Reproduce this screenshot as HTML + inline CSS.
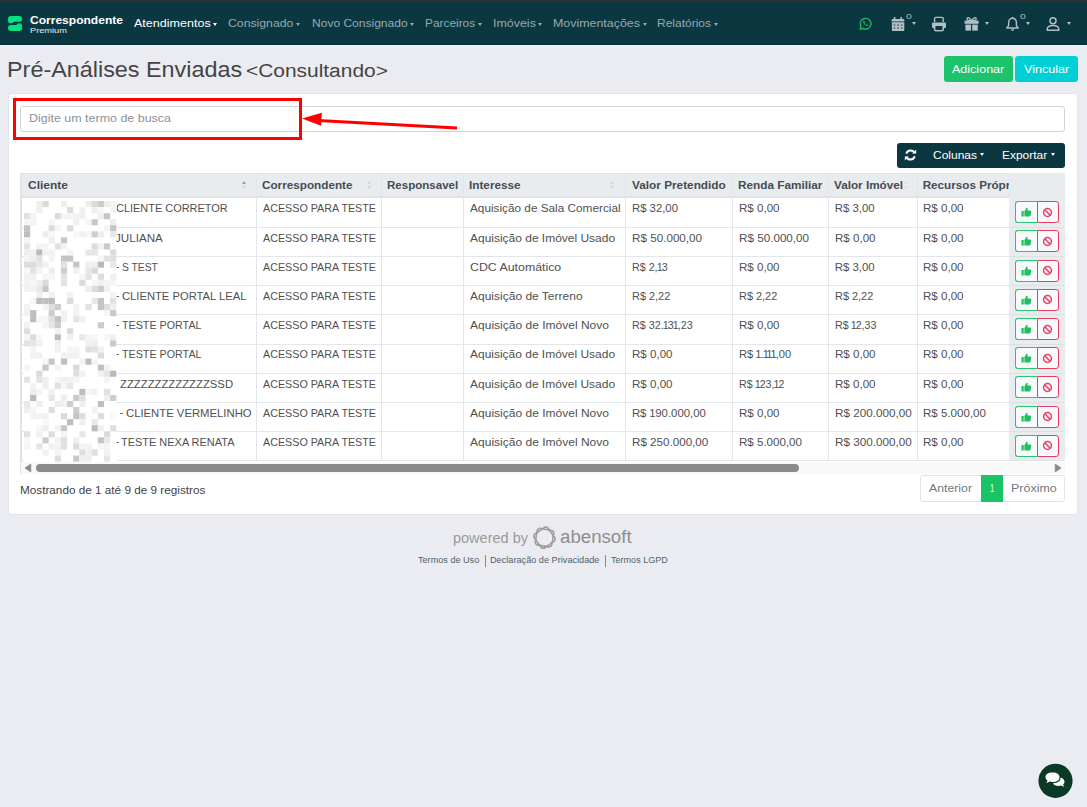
<!DOCTYPE html>
<html><head><meta charset="utf-8">
<style>
*{box-sizing:border-box;margin:0;padding:0}
html,body{width:1087px;height:807px;overflow:hidden}
body{background:#ebecf1;font-family:"Liberation Sans",sans-serif;position:relative}
.a{position:absolute;white-space:nowrap}
</style></head><body>
<div class="a" style="left:0px;top:0px;width:1087px;height:2px;background:#2f2f2f;"></div>
<div class="a" style="left:0px;top:2px;width:1087px;height:42px;background:#0b3741;"></div>
<div class="a" style="left:0px;top:44px;width:1087px;height:1px;background:#042d36;"></div>
<div class="a" style="left:0px;top:45px;width:1087px;height:1px;background:#f1f2f5;"></div>
<svg class="a" style="left:0;top:0" width="40" height="45" viewBox="0 0 40 45"><g fill="#02e082"><rect x="8" y="16" width="14.1" height="5.8" rx="2.9"/><circle cx="10.9" cy="20.4" r="2.9"/><rect x="8" y="25.1" width="14.1" height="5.8" rx="2.9"/><circle cx="19.2" cy="26.2" r="2.9"/></g></svg>
<div class="a" style="left:29.92px;top:15px;font-size:11px;line-height:11px;color:#ffffff;font-weight:bold;transform:scaleX(1.0940);transform-origin:0 0;">Correspondente</div>
<div class="a" style="left:29.66px;top:27px;font-size:8px;line-height:8px;color:#e6ecee;transform:scaleX(1.1496);transform-origin:0 0;">Premium</div>
<div class="a" style="left:133.90px;top:18px;font-size:11.5px;line-height:11.5px;color:#ffffff;transform:scaleX(1.0912);transform-origin:0 0;">Atendimentos</div>
<div class="a" style="left:213.2px;top:22.5px;width:0;height:0;border-left:2.75px solid transparent;border-right:2.75px solid transparent;border-top:3px solid #ffffff"></div>
<div class="a" style="left:228.39px;top:18px;font-size:11.5px;line-height:11.5px;color:#95aab0;transform:scaleX(1.0644);transform-origin:0 0;">Consignado</div>
<div class="a" style="left:296.2px;top:22.5px;width:0;height:0;border-left:2.75px solid transparent;border-right:2.75px solid transparent;border-top:3px solid #95aab0"></div>
<div class="a" style="left:311.54px;top:18px;font-size:11.5px;line-height:11.5px;color:#95aab0;transform:scaleX(1.0461);transform-origin:0 0;">Novo Consignado</div>
<div class="a" style="left:409.7px;top:22.5px;width:0;height:0;border-left:2.75px solid transparent;border-right:2.75px solid transparent;border-top:3px solid #95aab0"></div>
<div class="a" style="left:425.05px;top:18px;font-size:11.5px;line-height:11.5px;color:#95aab0;transform:scaleX(1.0325);transform-origin:0 0;">Parceiros</div>
<div class="a" style="left:477.8px;top:22.5px;width:0;height:0;border-left:2.75px solid transparent;border-right:2.75px solid transparent;border-top:3px solid #95aab0"></div>
<div class="a" style="left:492.88px;top:18px;font-size:11.5px;line-height:11.5px;color:#95aab0;transform:scaleX(1.0817);transform-origin:0 0;">Imóveis</div>
<div class="a" style="left:538.3px;top:22.5px;width:0;height:0;border-left:2.75px solid transparent;border-right:2.75px solid transparent;border-top:3px solid #95aab0"></div>
<div class="a" style="left:553.01px;top:18px;font-size:11.5px;line-height:11.5px;color:#95aab0;transform:scaleX(1.0791);transform-origin:0 0;">Movimentações</div>
<div class="a" style="left:642.5px;top:22.5px;width:0;height:0;border-left:2.75px solid transparent;border-right:2.75px solid transparent;border-top:3px solid #95aab0"></div>
<div class="a" style="left:657.24px;top:18px;font-size:11.5px;line-height:11.5px;color:#95aab0;transform:scaleX(1.0431);transform-origin:0 0;">Relatórios</div>
<div class="a" style="left:713.8px;top:22.5px;width:0;height:0;border-left:2.75px solid transparent;border-right:2.75px solid transparent;border-top:3px solid #95aab0"></div>
<svg class="a" style="left:858.6px;top:17.3px" width="13.4" height="13.4" viewBox="0 0 15 15"><path d="M1.3 13.8 L2.2 10.6 A6 6 0 1 1 4.4 12.8 Z" fill="none" stroke="#1cbd58" stroke-width="1.5" stroke-linejoin="round"/><path d="M5 4.6 Q4.4 5.2 4.8 6.4 Q5.8 8.8 8.3 9.9 Q9.4 10.3 10 9.6 L10.1 8.9 L8.9 8.3 L8.3 8.8 Q6.8 8.1 6.1 6.6 L6.6 6 L6 4.6 Z" fill="#1cbd58"/></svg>
<svg class="a" style="left:891px;top:16px" width="16" height="16" viewBox="0 0 16 16" fill="#b3c0c5"><rect x="2.8" y="1" width="1.6" height="2.6" rx=".4"/><rect x="9.4" y="1" width="1.6" height="2.6" rx=".4"/><path d="M1.6 3 h10.7 a1 1 0 0 1 1 1 v1.6 h-12.7 v-1.6 a1 1 0 0 1 1 -1z"/><path d="M.9 6.2 h12.4 v7.8 a.9 .9 0 0 1 -.9 .9 h-10.6 a.9 .9 0 0 1 -.9 -.9z"/><g fill="#5c6f76"><rect x="2.6" y="8.2" width="1.7" height="1.7"/><rect x="6.2" y="8.2" width="1.7" height="1.7"/><rect x="9.8" y="8.2" width="1.7" height="1.7"/><rect x="2.6" y="11.3" width="1.7" height="1.7"/><rect x="6.2" y="11.3" width="1.7" height="1.7"/><rect x="9.8" y="11.3" width="1.7" height="1.7"/></g></svg>
<div class="a" style="left:905.88px;top:13px;font-size:8px;line-height:8px;color:#b3c0c5;transform:scaleX(1.3021);transform-origin:0 0;">0</div>
<div class="a" style="left:912px;top:21.8px;width:0;height:0;border-left:2.75px solid transparent;border-right:2.75px solid transparent;border-top:3px solid #b3c0c5"></div>
<svg class="a" style="left:931px;top:16px" width="16" height="16" viewBox="0 0 16 16"><path d="M3.6 6 V2.6 a1.2 1.2 0 0 1 1.2 -1.2 h6.2 a1.2 1.2 0 0 1 1.2 1.2 V6" fill="none" stroke="#b3c0c5" stroke-width="1.4"/><path d="M2.2 6.4 h11.6 a1.2 1.2 0 0 1 1.2 1.2 v3.2 a1.2 1.2 0 0 1 -1.2 1.2 h-11.6 a1.2 1.2 0 0 1 -1.2 -1.2 v-3.2 a1.2 1.2 0 0 1 1.2 -1.2z" fill="#b3c0c5"/><path d="M3.6 10.6 V13.6 a1 1 0 0 0 1 1 h6.6 a1 1 0 0 0 1 -1 V10.6" fill="none" stroke="#b3c0c5" stroke-width="1.4"/><rect x="4.3" y="10" width="7.4" height="4" fill="#0b3741"/><path d="M3.6 10.2 V13.6 a1 1 0 0 0 1 1 h6.6 a1 1 0 0 0 1 -1 V10.2" fill="none" stroke="#b3c0c5" stroke-width="1.4"/></svg>
<svg class="a" style="left:964px;top:16px" width="16" height="16" viewBox="0 0 16 16" fill="#b3c0c5"><path d="M7.2 4.3 C5.5 1 2.8 1 3 3.2 C3.1 4 3.8 4.3 4.5 4.3z M8 4.3 C9.7 1 12.4 1 12.2 3.2 C12.1 4 11.4 4.3 10.7 4.3z" fill="none" stroke="#b3c0c5" stroke-width="1.3"/><rect x="0.6" y="4.6" width="14" height="3.2"/><rect x="1.4" y="8.6" width="5.6" height="6"/><rect x="8.2" y="8.6" width="5.6" height="6"/></svg>
<div class="a" style="left:985.2px;top:21.8px;width:0;height:0;border-left:2.75px solid transparent;border-right:2.75px solid transparent;border-top:3px solid #b3c0c5"></div>
<svg class="a" style="left:1005px;top:16px" width="16" height="16" viewBox="0 0 16 16"><path d="M7.5 2.2 C4.7 2.2 3.6 4.5 3.6 7 v2.6 L1.8 12 h11.4 L11.4 9.6 V7 C11.4 4.5 10.3 2.2 7.5 2.2z" fill="none" stroke="#b3c0c5" stroke-width="1.4" stroke-linejoin="round"/><rect x="6.8" y="0.9" width="1.4" height="1.6" fill="#b3c0c5"/><path d="M5.9 13.2 h3.2 a1.6 1.6 0 0 1 -3.2 0z" fill="#b3c0c5"/></svg>
<div class="a" style="left:1019.78px;top:13px;font-size:8px;line-height:8px;color:#b3c0c5;transform:scaleX(1.3021);transform-origin:0 0;">0</div>
<div class="a" style="left:1025.8px;top:21.8px;width:0;height:0;border-left:2.75px solid transparent;border-right:2.75px solid transparent;border-top:3px solid #b3c0c5"></div>
<svg class="a" style="left:1045px;top:16px" width="16" height="16" viewBox="0 0 16 16" fill="none" stroke="#b3c0c5" stroke-width="1.5"><circle cx="8" cy="4.8" r="3"/><path d="M2.2 14.2 v-0.8 C2.2 10.4 5 9.4 8 9.4 C11 9.4 13.8 10.4 13.8 13.4 v0.8z" stroke-linejoin="round"/></svg>
<div class="a" style="left:1066.6px;top:21.8px;width:0;height:0;border-left:2.75px solid transparent;border-right:2.75px solid transparent;border-top:3px solid #b3c0c5"></div>
<div class="a" style="left:6.63px;top:59px;font-size:22.5px;line-height:22.5px;color:#444444;transform:scaleX(1.0390);transform-origin:0 0;">Pré-Análises Enviadas</div>
<div class="a" style="left:246.25px;top:62px;font-size:18px;line-height:18px;color:#444444;transform:scaleX(1.1618);transform-origin:0 0;">&lt;Consultando&gt;</div>
<div class="a" style="left:944px;top:56px;width:69px;height:26px;background:#1cc36b;border-radius:3px;"></div>
<div class="a" style="left:952.00px;top:64px;font-size:11px;line-height:11px;color:#ffffff;transform:scaleX(1.1391);transform-origin:0 0;">Adicionar</div>
<div class="a" style="left:1015px;top:56px;width:63px;height:26px;background:#00cfd6;border-radius:3px;"></div>
<div class="a" style="left:1023.94px;top:64px;font-size:11px;line-height:11px;color:#ffffff;transform:scaleX(1.1459);transform-origin:0 0;">Vincular</div>
<div class="a" style="left:8px;top:93px;width:1070px;height:422px;background:#ffffff;border:1px solid #e2e4e9;border-radius:3px;"></div>
<div class="a" style="left:20px;top:106px;width:1045px;height:26px;background:#ffffff;border:1px solid #cfd4da;border-radius:3px;"></div>
<div class="a" style="left:29.00px;top:113px;font-size:11px;line-height:11px;color:#8c9196;transform:scaleX(1.1328);transform-origin:0 0;">Digite um termo de busca</div>
<div class="a" style="left:897px;top:143px;width:168px;height:25px;background:#0b3741;border-radius:3px;"></div>
<svg class="a" style="left:904px;top:149px" width="13" height="12" viewBox="0 0 13 12"><path d="M10.6 4.2 A4.4 4.4 0 0 0 2.3 4.6" fill="none" stroke="#fff" stroke-width="2"/><path d="M8.2 4.6 h4 v-4z" fill="#fff"/><path d="M2.4 7.8 A4.4 4.4 0 0 0 10.7 7.4" fill="none" stroke="#fff" stroke-width="2"/><path d="M4.8 7.4 h-4 v4z" fill="#fff"/></svg>
<div class="a" style="left:933.30px;top:150px;font-size:11px;line-height:11px;color:#ffffff;transform:scaleX(1.0904);transform-origin:0 0;">Colunas</div>
<div class="a" style="left:979.5px;top:153px;width:0;height:0;border-left:2.75px solid transparent;border-right:2.75px solid transparent;border-top:3px solid #ffffff"></div>
<div class="a" style="left:1001.64px;top:150px;font-size:11px;line-height:11px;color:#ffffff;transform:scaleX(1.0870);transform-origin:0 0;">Exportar</div>
<div class="a" style="left:1050.5px;top:153px;width:0;height:0;border-left:2.75px solid transparent;border-right:2.75px solid transparent;border-top:3px solid #ffffff"></div>
<div class="a" style="left:21px;top:173px;width:1044px;height:24px;background:#e9ecef;"></div>
<div class="a" style="left:21px;top:197px;width:1044px;height:264px;background:#ffffff;"></div>
<div class="a" style="left:27.52px;top:179px;font-size:11.7px;line-height:11.7px;color:#444c55;font-weight:bold;transform:scaleX(1.0225);transform-origin:0 0;">Cliente</div>
<div class="a" style="left:262.23px;top:179px;font-size:11.7px;line-height:11.7px;color:#444c55;font-weight:bold;transform:scaleX(1.0028);transform-origin:0 0;">Correspondente</div>
<div class="a" style="left:386.75px;top:179px;font-size:11.7px;line-height:11.7px;color:#444c55;font-weight:bold;transform:scaleX(0.9871);transform-origin:0 0;">Responsavel</div>
<div class="a" style="left:469.43px;top:179px;font-size:11.7px;line-height:11.7px;color:#444c55;font-weight:bold;transform:scaleX(1.0061);transform-origin:0 0;">Interesse</div>
<div class="a" style="left:632.44px;top:179px;font-size:11.7px;line-height:11.7px;color:#444c55;font-weight:bold;transform:scaleX(1.0094);transform-origin:0 0;">Valor Pretendido</div>
<div class="a" style="left:738.03px;top:179px;font-size:11.7px;line-height:11.7px;color:#444c55;font-weight:bold;transform:scaleX(1.0066);transform-origin:0 0;">Renda Familiar</div>
<div class="a" style="left:834.44px;top:179px;font-size:11.7px;line-height:11.7px;color:#444c55;font-weight:bold;transform:scaleX(1.0030);transform-origin:0 0;">Valor Imóvel</div>
<div class="a" style="left:922.64px;top:179px;font-size:11.7px;line-height:11.7px;color:#444c55;font-weight:bold;">Recursos Própr</div>
<div class="a" style="left:241.5px;top:181px;width:0;height:0;border-left:2.5px solid transparent;border-right:2.5px solid transparent;border-bottom:3px solid #9aa0a6"></div>
<div class="a" style="left:241.5px;top:186px;width:0;height:0;border-left:2.5px solid transparent;border-right:2.5px solid transparent;border-top:3px solid #d0d4d8"></div>
<div class="a" style="left:367px;top:181px;width:0;height:0;border-left:2.5px solid transparent;border-right:2.5px solid transparent;border-bottom:3px solid #d0d4d8"></div>
<div class="a" style="left:367px;top:186px;width:0;height:0;border-left:2.5px solid transparent;border-right:2.5px solid transparent;border-top:3px solid #d0d4d8"></div>
<div class="a" style="left:610px;top:181px;width:0;height:0;border-left:2.5px solid transparent;border-right:2.5px solid transparent;border-bottom:3px solid #d0d4d8"></div>
<div class="a" style="left:610px;top:186px;width:0;height:0;border-left:2.5px solid transparent;border-right:2.5px solid transparent;border-top:3px solid #d0d4d8"></div>
<div class="a" style="left:904px;top:181px;width:0;height:0;border-left:2.5px solid transparent;border-right:2.5px solid transparent;border-bottom:3px solid #dde0e4"></div>
<div class="a" style="left:904px;top:186px;width:0;height:0;border-left:2.5px solid transparent;border-right:2.5px solid transparent;border-top:3px solid #dde0e4"></div>
<div class="a" style="left:116.05px;top:203px;font-size:10.8px;line-height:10.8px;color:#505050;transform:scaleX(1.0138);transform-origin:0 0;">CLIENTE CORRETOR</div>
<div class="a" style="left:262.70px;top:203px;font-size:10.7px;line-height:10.7px;color:#505050;transform:scaleX(1.0050);transform-origin:0 0;">ACESSO PARA TESTE</div>
<div class="a" style="left:470.20px;top:202px;font-size:11.7px;line-height:11.7px;color:#505050;transform:scaleX(1.0076);transform-origin:0 0;">Aquisição de Sala Comercial</div>
<div class="a" style="left:631.89px;top:203px;font-size:11.4px;line-height:11.4px;color:#505050;transform:scaleX(0.9939);transform-origin:0 0;">R$ 32,00</div>
<div class="a" style="left:738.57px;top:203px;font-size:11.4px;line-height:11.4px;color:#505050;transform:scaleX(1.0158);transform-origin:0 0;">R$ 0,00</div>
<div class="a" style="left:834.69px;top:203px;font-size:11.4px;line-height:11.4px;color:#505050;">R$ 3,00</div>
<div class="a" style="left:922.87px;top:203px;font-size:11.4px;line-height:11.4px;color:#505050;transform:scaleX(1.0158);transform-origin:0 0;">R$ 0,00</div>
<div class="a" style="left:21px;top:227px;width:1044px;height:1px;background:#e3e6ea;"></div>
<div class="a" style="left:115.33px;top:233px;font-size:10.8px;line-height:10.8px;color:#505050;transform:scaleX(1.0763);transform-origin:0 0;">JULIANA</div>
<div class="a" style="left:262.70px;top:233px;font-size:10.7px;line-height:10.7px;color:#505050;transform:scaleX(1.0050);transform-origin:0 0;">ACESSO PARA TESTE</div>
<div class="a" style="left:470.20px;top:232px;font-size:11.7px;line-height:11.7px;color:#505050;transform:scaleX(1.0242);transform-origin:0 0;">Aquisição de Imóvel Usado</div>
<div class="a" style="left:631.87px;top:233px;font-size:11.4px;line-height:11.4px;color:#505050;transform:scaleX(1.0246);transform-origin:0 0;">R$ 50.000,00</div>
<div class="a" style="left:738.57px;top:233px;font-size:11.4px;line-height:11.4px;color:#505050;transform:scaleX(1.0246);transform-origin:0 0;">R$ 50.000,00</div>
<div class="a" style="left:834.67px;top:233px;font-size:11.4px;line-height:11.4px;color:#505050;transform:scaleX(1.0158);transform-origin:0 0;">R$ 0,00</div>
<div class="a" style="left:922.87px;top:233px;font-size:11.4px;line-height:11.4px;color:#505050;transform:scaleX(1.0158);transform-origin:0 0;">R$ 0,00</div>
<div class="a" style="left:21px;top:256px;width:1044px;height:1px;background:#e3e6ea;"></div>
<div class="a" style="left:122.34px;top:262px;font-size:10.8px;line-height:10.8px;color:#505050;transform:scaleX(0.9544);transform-origin:0 0;">S TEST</div>
<div class="a" style="left:116.2px;top:267px;width:3px;height:1px;background:#6a6a6a;"></div>
<div class="a" style="left:262.70px;top:262px;font-size:10.7px;line-height:10.7px;color:#505050;transform:scaleX(1.0050);transform-origin:0 0;">ACESSO PARA TESTE</div>
<div class="a" style="left:469.58px;top:261px;font-size:11.7px;line-height:11.7px;color:#505050;transform:scaleX(1.0561);transform-origin:0 0;">CDC Automático</div>
<div class="a" style="left:631.94px;top:262px;font-size:11.4px;line-height:11.4px;color:#505050;transform:scaleX(0.9389);transform-origin:0 0;">R$ 2<span style="letter-spacing:-1.00px">,</span><span style="letter-spacing:-1.00px">1</span>3</div>
<div class="a" style="left:738.57px;top:262px;font-size:11.4px;line-height:11.4px;color:#505050;transform:scaleX(1.0158);transform-origin:0 0;">R$ 0,00</div>
<div class="a" style="left:834.69px;top:262px;font-size:11.4px;line-height:11.4px;color:#505050;">R$ 3,00</div>
<div class="a" style="left:922.87px;top:262px;font-size:11.4px;line-height:11.4px;color:#505050;transform:scaleX(1.0158);transform-origin:0 0;">R$ 0,00</div>
<div class="a" style="left:21px;top:285px;width:1044px;height:1px;background:#e3e6ea;"></div>
<div class="a" style="left:121.84px;top:291px;font-size:10.8px;line-height:10.8px;color:#505050;transform:scaleX(1.0381);transform-origin:0 0;">CLIENTE PORTAL LEAL</div>
<div class="a" style="left:116.2px;top:296px;width:3px;height:1px;background:#6a6a6a;"></div>
<div class="a" style="left:262.70px;top:291px;font-size:10.7px;line-height:10.7px;color:#505050;transform:scaleX(1.0050);transform-origin:0 0;">ACESSO PARA TESTE</div>
<div class="a" style="left:470.20px;top:290px;font-size:11.7px;line-height:11.7px;color:#505050;transform:scaleX(1.0273);transform-origin:0 0;">Aquisição de Terreno</div>
<div class="a" style="left:631.93px;top:291px;font-size:11.4px;line-height:11.4px;color:#505050;transform:scaleX(0.9579);transform-origin:0 0;">R$ 2,22</div>
<div class="a" style="left:738.63px;top:291px;font-size:11.4px;line-height:11.4px;color:#505050;transform:scaleX(0.9579);transform-origin:0 0;">R$ 2,22</div>
<div class="a" style="left:834.73px;top:291px;font-size:11.4px;line-height:11.4px;color:#505050;transform:scaleX(0.9579);transform-origin:0 0;">R$ 2,22</div>
<div class="a" style="left:922.87px;top:291px;font-size:11.4px;line-height:11.4px;color:#505050;transform:scaleX(1.0158);transform-origin:0 0;">R$ 0,00</div>
<div class="a" style="left:21px;top:314px;width:1044px;height:1px;background:#e3e6ea;"></div>
<div class="a" style="left:121.89px;top:320px;font-size:10.8px;line-height:10.8px;color:#505050;transform:scaleX(0.9939);transform-origin:0 0;">TESTE PORTAL</div>
<div class="a" style="left:116.2px;top:325px;width:3px;height:1px;background:#6a6a6a;"></div>
<div class="a" style="left:262.70px;top:320px;font-size:10.7px;line-height:10.7px;color:#505050;transform:scaleX(1.0050);transform-origin:0 0;">ACESSO PARA TESTE</div>
<div class="a" style="left:470.20px;top:319px;font-size:11.7px;line-height:11.7px;color:#505050;transform:scaleX(1.0283);transform-origin:0 0;">Aquisição de Imóvel Novo</div>
<div class="a" style="left:631.94px;top:320px;font-size:11.4px;line-height:11.4px;color:#505050;transform:scaleX(0.9431);transform-origin:0 0;">R$ 32<span style="letter-spacing:-1.00px">.</span><span style="letter-spacing:-1.00px">1</span><span style="letter-spacing:-1.00px">3</span><span style="letter-spacing:-1.00px">1</span>,23</div>
<div class="a" style="left:738.57px;top:320px;font-size:11.4px;line-height:11.4px;color:#505050;transform:scaleX(1.0158);transform-origin:0 0;">R$ 0,00</div>
<div class="a" style="left:834.75px;top:320px;font-size:11.4px;line-height:11.4px;color:#505050;transform:scaleX(0.9367);transform-origin:0 0;">R$<span style="letter-spacing:-1.00px"> </span><span style="letter-spacing:-1.00px">1</span>2,33</div>
<div class="a" style="left:922.87px;top:320px;font-size:11.4px;line-height:11.4px;color:#505050;transform:scaleX(1.0158);transform-origin:0 0;">R$ 0,00</div>
<div class="a" style="left:21px;top:344px;width:1044px;height:1px;background:#e3e6ea;"></div>
<div class="a" style="left:121.89px;top:349px;font-size:10.8px;line-height:10.8px;color:#505050;transform:scaleX(0.9939);transform-origin:0 0;">TESTE PORTAL</div>
<div class="a" style="left:116.2px;top:354px;width:3px;height:1px;background:#6a6a6a;"></div>
<div class="a" style="left:262.70px;top:349px;font-size:10.7px;line-height:10.7px;color:#505050;transform:scaleX(1.0050);transform-origin:0 0;">ACESSO PARA TESTE</div>
<div class="a" style="left:470.20px;top:348px;font-size:11.7px;line-height:11.7px;color:#505050;transform:scaleX(1.0242);transform-origin:0 0;">Aquisição de Imóvel Usado</div>
<div class="a" style="left:631.87px;top:349px;font-size:11.4px;line-height:11.4px;color:#505050;transform:scaleX(1.0158);transform-origin:0 0;">R$ 0,00</div>
<div class="a" style="left:738.61px;top:349px;font-size:11.4px;line-height:11.4px;color:#505050;transform:scaleX(0.9783);transform-origin:0 0;">R$<span style="letter-spacing:-1.00px"> </span><span style="letter-spacing:-1.00px">1</span><span style="letter-spacing:-1.00px">.</span><span style="letter-spacing:-2.00px">1</span><span style="letter-spacing:-2.00px">1</span><span style="letter-spacing:-1.00px">1</span>,00</div>
<div class="a" style="left:834.67px;top:349px;font-size:11.4px;line-height:11.4px;color:#505050;transform:scaleX(1.0158);transform-origin:0 0;">R$ 0,00</div>
<div class="a" style="left:922.87px;top:349px;font-size:11.4px;line-height:11.4px;color:#505050;transform:scaleX(1.0158);transform-origin:0 0;">R$ 0,00</div>
<div class="a" style="left:21px;top:373px;width:1044px;height:1px;background:#e3e6ea;"></div>
<div class="a" style="left:119.56px;top:379px;font-size:10.8px;line-height:10.8px;color:#505050;transform:scaleX(1.0473);transform-origin:0 0;">ZZZZZZZZZZZZZSSD</div>
<div class="a" style="left:262.70px;top:379px;font-size:10.7px;line-height:10.7px;color:#505050;transform:scaleX(1.0050);transform-origin:0 0;">ACESSO PARA TESTE</div>
<div class="a" style="left:470.20px;top:378px;font-size:11.7px;line-height:11.7px;color:#505050;transform:scaleX(1.0242);transform-origin:0 0;">Aquisição de Imóvel Usado</div>
<div class="a" style="left:631.87px;top:379px;font-size:11.4px;line-height:11.4px;color:#505050;transform:scaleX(1.0158);transform-origin:0 0;">R$ 0,00</div>
<div class="a" style="left:738.65px;top:379px;font-size:11.4px;line-height:11.4px;color:#505050;transform:scaleX(0.9357);transform-origin:0 0;">R$<span style="letter-spacing:-1.00px"> </span><span style="letter-spacing:-1.00px">1</span>23<span style="letter-spacing:-1.00px">,</span><span style="letter-spacing:-1.00px">1</span>2</div>
<div class="a" style="left:834.67px;top:379px;font-size:11.4px;line-height:11.4px;color:#505050;transform:scaleX(1.0158);transform-origin:0 0;">R$ 0,00</div>
<div class="a" style="left:922.87px;top:379px;font-size:11.4px;line-height:11.4px;color:#505050;transform:scaleX(1.0158);transform-origin:0 0;">R$ 0,00</div>
<div class="a" style="left:21px;top:402px;width:1044px;height:1px;background:#e3e6ea;"></div>
<div class="a" style="left:125.63px;top:408px;font-size:10.8px;line-height:10.8px;color:#505050;transform:scaleX(1.0466);transform-origin:0 0;">CLIENTE VERMELINHO</div>
<div class="a" style="left:120.3px;top:413px;width:3px;height:1px;background:#6a6a6a;"></div>
<div class="a" style="left:262.70px;top:408px;font-size:10.7px;line-height:10.7px;color:#505050;transform:scaleX(1.0050);transform-origin:0 0;">ACESSO PARA TESTE</div>
<div class="a" style="left:470.20px;top:407px;font-size:11.7px;line-height:11.7px;color:#505050;transform:scaleX(1.0283);transform-origin:0 0;">Aquisição de Imóvel Novo</div>
<div class="a" style="left:631.89px;top:408px;font-size:11.4px;line-height:11.4px;color:#505050;">R$<span style="letter-spacing:-0.34px"> </span><span style="letter-spacing:-0.34px">1</span>90.000,00</div>
<div class="a" style="left:738.57px;top:408px;font-size:11.4px;line-height:11.4px;color:#505050;transform:scaleX(1.0158);transform-origin:0 0;">R$ 0,00</div>
<div class="a" style="left:834.66px;top:408px;font-size:11.4px;line-height:11.4px;color:#505050;transform:scaleX(1.0276);transform-origin:0 0;">R$ 200.000,00</div>
<div class="a" style="left:922.87px;top:408px;font-size:11.4px;line-height:11.4px;color:#505050;transform:scaleX(1.0145);transform-origin:0 0;">R$ 5.000,00</div>
<div class="a" style="left:21px;top:431px;width:1044px;height:1px;background:#e3e6ea;"></div>
<div class="a" style="left:121.48px;top:437px;font-size:10.8px;line-height:10.8px;color:#505050;transform:scaleX(1.0147);transform-origin:0 0;">TESTE NEXA RENATA</div>
<div class="a" style="left:116.2px;top:442px;width:3px;height:1px;background:#6a6a6a;"></div>
<div class="a" style="left:262.70px;top:437px;font-size:10.7px;line-height:10.7px;color:#505050;transform:scaleX(1.0050);transform-origin:0 0;">ACESSO PARA TESTE</div>
<div class="a" style="left:470.20px;top:436px;font-size:11.7px;line-height:11.7px;color:#505050;transform:scaleX(1.0283);transform-origin:0 0;">Aquisição de Imóvel Novo</div>
<div class="a" style="left:631.87px;top:437px;font-size:11.4px;line-height:11.4px;color:#505050;transform:scaleX(1.0208);transform-origin:0 0;">R$ 250.000,00</div>
<div class="a" style="left:738.57px;top:437px;font-size:11.4px;line-height:11.4px;color:#505050;transform:scaleX(1.0145);transform-origin:0 0;">R$ 5.000,00</div>
<div class="a" style="left:834.66px;top:437px;font-size:11.4px;line-height:11.4px;color:#505050;transform:scaleX(1.0276);transform-origin:0 0;">R$ 300.000,00</div>
<div class="a" style="left:922.87px;top:437px;font-size:11.4px;line-height:11.4px;color:#505050;transform:scaleX(1.0158);transform-origin:0 0;">R$ 0,00</div>
<div class="a" style="left:21px;top:460px;width:1044px;height:1px;background:#e3e6ea;"></div>
<div class="a" style="left:256.0px;top:173px;width:1px;height:288px;background:#e3e6ea;"></div>
<div class="a" style="left:380.5px;top:173px;width:1px;height:288px;background:#e3e6ea;"></div>
<div class="a" style="left:463.0px;top:173px;width:1px;height:288px;background:#e3e6ea;"></div>
<div class="a" style="left:625.1px;top:173px;width:1px;height:288px;background:#e3e6ea;"></div>
<div class="a" style="left:731.5px;top:173px;width:1px;height:288px;background:#e3e6ea;"></div>
<div class="a" style="left:828.0px;top:173px;width:1px;height:288px;background:#e3e6ea;"></div>
<div class="a" style="left:916.5px;top:173px;width:1px;height:288px;background:#e3e6ea;"></div>
<div class="a" style="left:1008.5px;top:173px;width:1px;height:288px;background:#e3e6ea;"></div>
<div class="a" style="left:20px;top:173px;width:2px;height:301px;background:#dfe2e6;"></div>
<div class="a" style="left:21px;top:173px;width:1044px;height:1px;background:#dfe2e6;"></div>
<div class="a" style="left:21px;top:196px;width:1044px;height:2px;background:#dfe2e6;"></div>
<div class="a" style="left:1009px;top:173px;width:56px;height:288px;background:#e9ecef;"></div>
<div class="a" style="left:1009px;top:227px;width:56px;height:1px;background:#dde1e5;"></div>
<div class="a" style="left:1015.4px;top:201.20px;width:22px;height:22px;background:#f8f9fa;border:1px solid #28c76f;border-right:none;border-radius:3px 0 0 3px"></div>
<div class="a" style="left:1037.2px;top:201.20px;width:21.5px;height:22px;background:#f8f9fa;border:1px solid #ee3b63;border-radius:0 3px 3px 0"></div>
<svg class="a" style="left:1021px;top:207.20px" width="11" height="10" viewBox="0 0 11 10" fill="#1dbf5e"><rect x="0.5" y="4" width="2.2" height="5.5"/><path d="M3.4 4.2 L5.6 0.8 Q6.7 0.6 6.8 1.8 L6.3 3.6 H9.3 Q10.4 3.8 10.2 5 L9.5 8.6 Q9.2 9.5 8.4 9.5 H3.4z"/></svg>
<svg class="a" style="left:1042px;top:206.70px" width="11" height="11" viewBox="0 0 11 11" fill="none" stroke="#ee3b63" stroke-width="1.5"><circle cx="5.5" cy="5.5" r="3.9"/><path d="M2.8 2.8 L8.2 8.2"/></svg>
<div class="a" style="left:1009px;top:256px;width:56px;height:1px;background:#dde1e5;"></div>
<div class="a" style="left:1015.4px;top:230.40px;width:22px;height:22px;background:#f8f9fa;border:1px solid #28c76f;border-right:none;border-radius:3px 0 0 3px"></div>
<div class="a" style="left:1037.2px;top:230.40px;width:21.5px;height:22px;background:#f8f9fa;border:1px solid #ee3b63;border-radius:0 3px 3px 0"></div>
<svg class="a" style="left:1021px;top:236.40px" width="11" height="10" viewBox="0 0 11 10" fill="#1dbf5e"><rect x="0.5" y="4" width="2.2" height="5.5"/><path d="M3.4 4.2 L5.6 0.8 Q6.7 0.6 6.8 1.8 L6.3 3.6 H9.3 Q10.4 3.8 10.2 5 L9.5 8.6 Q9.2 9.5 8.4 9.5 H3.4z"/></svg>
<svg class="a" style="left:1042px;top:235.90px" width="11" height="11" viewBox="0 0 11 11" fill="none" stroke="#ee3b63" stroke-width="1.5"><circle cx="5.5" cy="5.5" r="3.9"/><path d="M2.8 2.8 L8.2 8.2"/></svg>
<div class="a" style="left:1009px;top:285px;width:56px;height:1px;background:#dde1e5;"></div>
<div class="a" style="left:1015.4px;top:259.60px;width:22px;height:22px;background:#f8f9fa;border:1px solid #28c76f;border-right:none;border-radius:3px 0 0 3px"></div>
<div class="a" style="left:1037.2px;top:259.60px;width:21.5px;height:22px;background:#f8f9fa;border:1px solid #ee3b63;border-radius:0 3px 3px 0"></div>
<svg class="a" style="left:1021px;top:265.60px" width="11" height="10" viewBox="0 0 11 10" fill="#1dbf5e"><rect x="0.5" y="4" width="2.2" height="5.5"/><path d="M3.4 4.2 L5.6 0.8 Q6.7 0.6 6.8 1.8 L6.3 3.6 H9.3 Q10.4 3.8 10.2 5 L9.5 8.6 Q9.2 9.5 8.4 9.5 H3.4z"/></svg>
<svg class="a" style="left:1042px;top:265.10px" width="11" height="11" viewBox="0 0 11 11" fill="none" stroke="#ee3b63" stroke-width="1.5"><circle cx="5.5" cy="5.5" r="3.9"/><path d="M2.8 2.8 L8.2 8.2"/></svg>
<div class="a" style="left:1009px;top:314px;width:56px;height:1px;background:#dde1e5;"></div>
<div class="a" style="left:1015.4px;top:288.80px;width:22px;height:22px;background:#f8f9fa;border:1px solid #28c76f;border-right:none;border-radius:3px 0 0 3px"></div>
<div class="a" style="left:1037.2px;top:288.80px;width:21.5px;height:22px;background:#f8f9fa;border:1px solid #ee3b63;border-radius:0 3px 3px 0"></div>
<svg class="a" style="left:1021px;top:294.80px" width="11" height="10" viewBox="0 0 11 10" fill="#1dbf5e"><rect x="0.5" y="4" width="2.2" height="5.5"/><path d="M3.4 4.2 L5.6 0.8 Q6.7 0.6 6.8 1.8 L6.3 3.6 H9.3 Q10.4 3.8 10.2 5 L9.5 8.6 Q9.2 9.5 8.4 9.5 H3.4z"/></svg>
<svg class="a" style="left:1042px;top:294.30px" width="11" height="11" viewBox="0 0 11 11" fill="none" stroke="#ee3b63" stroke-width="1.5"><circle cx="5.5" cy="5.5" r="3.9"/><path d="M2.8 2.8 L8.2 8.2"/></svg>
<div class="a" style="left:1009px;top:344px;width:56px;height:1px;background:#dde1e5;"></div>
<div class="a" style="left:1015.4px;top:318.00px;width:22px;height:22px;background:#f8f9fa;border:1px solid #28c76f;border-right:none;border-radius:3px 0 0 3px"></div>
<div class="a" style="left:1037.2px;top:318.00px;width:21.5px;height:22px;background:#f8f9fa;border:1px solid #ee3b63;border-radius:0 3px 3px 0"></div>
<svg class="a" style="left:1021px;top:324.00px" width="11" height="10" viewBox="0 0 11 10" fill="#1dbf5e"><rect x="0.5" y="4" width="2.2" height="5.5"/><path d="M3.4 4.2 L5.6 0.8 Q6.7 0.6 6.8 1.8 L6.3 3.6 H9.3 Q10.4 3.8 10.2 5 L9.5 8.6 Q9.2 9.5 8.4 9.5 H3.4z"/></svg>
<svg class="a" style="left:1042px;top:323.50px" width="11" height="11" viewBox="0 0 11 11" fill="none" stroke="#ee3b63" stroke-width="1.5"><circle cx="5.5" cy="5.5" r="3.9"/><path d="M2.8 2.8 L8.2 8.2"/></svg>
<div class="a" style="left:1009px;top:373px;width:56px;height:1px;background:#dde1e5;"></div>
<div class="a" style="left:1015.4px;top:347.20px;width:22px;height:22px;background:#f8f9fa;border:1px solid #28c76f;border-right:none;border-radius:3px 0 0 3px"></div>
<div class="a" style="left:1037.2px;top:347.20px;width:21.5px;height:22px;background:#f8f9fa;border:1px solid #ee3b63;border-radius:0 3px 3px 0"></div>
<svg class="a" style="left:1021px;top:353.20px" width="11" height="10" viewBox="0 0 11 10" fill="#1dbf5e"><rect x="0.5" y="4" width="2.2" height="5.5"/><path d="M3.4 4.2 L5.6 0.8 Q6.7 0.6 6.8 1.8 L6.3 3.6 H9.3 Q10.4 3.8 10.2 5 L9.5 8.6 Q9.2 9.5 8.4 9.5 H3.4z"/></svg>
<svg class="a" style="left:1042px;top:352.70px" width="11" height="11" viewBox="0 0 11 11" fill="none" stroke="#ee3b63" stroke-width="1.5"><circle cx="5.5" cy="5.5" r="3.9"/><path d="M2.8 2.8 L8.2 8.2"/></svg>
<div class="a" style="left:1009px;top:402px;width:56px;height:1px;background:#dde1e5;"></div>
<div class="a" style="left:1015.4px;top:376.40px;width:22px;height:22px;background:#f8f9fa;border:1px solid #28c76f;border-right:none;border-radius:3px 0 0 3px"></div>
<div class="a" style="left:1037.2px;top:376.40px;width:21.5px;height:22px;background:#f8f9fa;border:1px solid #ee3b63;border-radius:0 3px 3px 0"></div>
<svg class="a" style="left:1021px;top:382.40px" width="11" height="10" viewBox="0 0 11 10" fill="#1dbf5e"><rect x="0.5" y="4" width="2.2" height="5.5"/><path d="M3.4 4.2 L5.6 0.8 Q6.7 0.6 6.8 1.8 L6.3 3.6 H9.3 Q10.4 3.8 10.2 5 L9.5 8.6 Q9.2 9.5 8.4 9.5 H3.4z"/></svg>
<svg class="a" style="left:1042px;top:381.90px" width="11" height="11" viewBox="0 0 11 11" fill="none" stroke="#ee3b63" stroke-width="1.5"><circle cx="5.5" cy="5.5" r="3.9"/><path d="M2.8 2.8 L8.2 8.2"/></svg>
<div class="a" style="left:1009px;top:431px;width:56px;height:1px;background:#dde1e5;"></div>
<div class="a" style="left:1015.4px;top:405.60px;width:22px;height:22px;background:#f8f9fa;border:1px solid #28c76f;border-right:none;border-radius:3px 0 0 3px"></div>
<div class="a" style="left:1037.2px;top:405.60px;width:21.5px;height:22px;background:#f8f9fa;border:1px solid #ee3b63;border-radius:0 3px 3px 0"></div>
<svg class="a" style="left:1021px;top:411.60px" width="11" height="10" viewBox="0 0 11 10" fill="#1dbf5e"><rect x="0.5" y="4" width="2.2" height="5.5"/><path d="M3.4 4.2 L5.6 0.8 Q6.7 0.6 6.8 1.8 L6.3 3.6 H9.3 Q10.4 3.8 10.2 5 L9.5 8.6 Q9.2 9.5 8.4 9.5 H3.4z"/></svg>
<svg class="a" style="left:1042px;top:411.10px" width="11" height="11" viewBox="0 0 11 11" fill="none" stroke="#ee3b63" stroke-width="1.5"><circle cx="5.5" cy="5.5" r="3.9"/><path d="M2.8 2.8 L8.2 8.2"/></svg>
<div class="a" style="left:1009px;top:460px;width:56px;height:1px;background:#dde1e5;"></div>
<div class="a" style="left:1015.4px;top:434.80px;width:22px;height:22px;background:#f8f9fa;border:1px solid #28c76f;border-right:none;border-radius:3px 0 0 3px"></div>
<div class="a" style="left:1037.2px;top:434.80px;width:21.5px;height:22px;background:#f8f9fa;border:1px solid #ee3b63;border-radius:0 3px 3px 0"></div>
<svg class="a" style="left:1021px;top:440.80px" width="11" height="10" viewBox="0 0 11 10" fill="#1dbf5e"><rect x="0.5" y="4" width="2.2" height="5.5"/><path d="M3.4 4.2 L5.6 0.8 Q6.7 0.6 6.8 1.8 L6.3 3.6 H9.3 Q10.4 3.8 10.2 5 L9.5 8.6 Q9.2 9.5 8.4 9.5 H3.4z"/></svg>
<svg class="a" style="left:1042px;top:440.30px" width="11" height="11" viewBox="0 0 11 11" fill="none" stroke="#ee3b63" stroke-width="1.5"><circle cx="5.5" cy="5.5" r="3.9"/><path d="M2.8 2.8 L8.2 8.2"/></svg>
<svg class="a" style="left:24px;top:198px" width="92.5" height="263.6" viewBox="0 0 92.5 263.6"><rect x="0" y="0" width="92.5" height="263.6" fill="#fff"/><rect x="12.30" y="3.00" width="6.2" height="6.11" fill="rgb(239,239,239)"/><rect x="18.45" y="3.00" width="6.2" height="6.11" fill="rgb(219,219,219)"/><rect x="36.90" y="3.00" width="6.2" height="6.11" fill="rgb(238,238,238)"/><rect x="61.50" y="3.00" width="6.2" height="6.11" fill="rgb(238,238,238)"/><rect x="67.65" y="3.00" width="6.2" height="6.11" fill="rgb(219,219,219)"/><rect x="73.80" y="3.00" width="6.2" height="6.11" fill="rgb(205,205,205)"/><rect x="79.95" y="3.00" width="6.2" height="6.11" fill="rgb(238,238,238)"/><rect x="86.10" y="3.00" width="6.2" height="6.11" fill="rgb(244,244,244)"/><rect x="12.30" y="9.06" width="6.2" height="6.11" fill="rgb(240,240,240)"/><rect x="43.05" y="9.06" width="6.2" height="6.11" fill="rgb(220,220,220)"/><rect x="55.35" y="9.06" width="6.2" height="6.11" fill="rgb(241,241,241)"/><rect x="67.65" y="9.06" width="6.2" height="6.11" fill="rgb(239,239,239)"/><rect x="73.80" y="9.06" width="6.2" height="6.11" fill="rgb(247,247,247)"/><rect x="86.10" y="9.06" width="6.2" height="6.11" fill="rgb(244,244,244)"/><rect x="0.00" y="15.12" width="6.2" height="6.11" fill="rgb(225,225,225)"/><rect x="6.15" y="15.12" width="6.2" height="6.11" fill="rgb(245,245,245)"/><rect x="30.75" y="15.12" width="6.2" height="6.11" fill="rgb(219,219,219)"/><rect x="36.90" y="15.12" width="6.2" height="6.11" fill="rgb(246,246,246)"/><rect x="43.05" y="15.12" width="6.2" height="6.11" fill="rgb(243,243,243)"/><rect x="49.20" y="15.12" width="6.2" height="6.11" fill="rgb(242,242,242)"/><rect x="55.35" y="15.12" width="6.2" height="6.11" fill="rgb(239,239,239)"/><rect x="73.80" y="15.12" width="6.2" height="6.11" fill="rgb(240,240,240)"/><rect x="79.95" y="15.12" width="6.2" height="6.11" fill="rgb(198,198,198)"/><rect x="0.00" y="21.18" width="6.2" height="6.11" fill="rgb(246,246,246)"/><rect x="6.15" y="21.18" width="6.2" height="6.11" fill="rgb(243,243,243)"/><rect x="24.60" y="21.18" width="6.2" height="6.11" fill="rgb(245,245,245)"/><rect x="49.20" y="21.18" width="6.2" height="6.11" fill="rgb(239,239,239)"/><rect x="61.50" y="21.18" width="6.2" height="6.11" fill="rgb(247,247,247)"/><rect x="67.65" y="21.18" width="6.2" height="6.11" fill="rgb(199,199,199)"/><rect x="86.10" y="21.18" width="6.2" height="6.11" fill="rgb(238,238,238)"/><rect x="0.00" y="27.24" width="6.2" height="6.11" fill="rgb(196,196,196)"/><rect x="24.60" y="27.24" width="6.2" height="6.11" fill="rgb(220,220,220)"/><rect x="30.75" y="27.24" width="6.2" height="6.11" fill="rgb(244,244,244)"/><rect x="43.05" y="27.24" width="6.2" height="6.11" fill="rgb(219,219,219)"/><rect x="79.95" y="27.24" width="6.2" height="6.11" fill="rgb(244,244,244)"/><rect x="86.10" y="27.24" width="6.2" height="6.11" fill="rgb(197,197,197)"/><rect x="0.00" y="33.30" width="6.2" height="6.11" fill="rgb(189,189,189)"/><rect x="18.45" y="33.30" width="6.2" height="6.11" fill="rgb(238,238,238)"/><rect x="24.60" y="33.30" width="6.2" height="6.11" fill="rgb(247,247,247)"/><rect x="49.20" y="33.30" width="6.2" height="6.11" fill="rgb(247,247,247)"/><rect x="55.35" y="33.30" width="6.2" height="6.11" fill="rgb(240,240,240)"/><rect x="61.50" y="33.30" width="6.2" height="6.11" fill="rgb(246,246,246)"/><rect x="67.65" y="33.30" width="6.2" height="6.11" fill="rgb(205,205,205)"/><rect x="73.80" y="33.30" width="6.2" height="6.11" fill="rgb(238,238,238)"/><rect x="86.10" y="33.30" width="6.2" height="6.11" fill="rgb(231,231,231)"/><rect x="0.00" y="39.36" width="6.2" height="6.11" fill="rgb(246,246,246)"/><rect x="24.60" y="39.36" width="6.2" height="6.11" fill="rgb(238,238,238)"/><rect x="36.90" y="39.36" width="6.2" height="6.11" fill="rgb(199,199,199)"/><rect x="0.00" y="45.42" width="6.2" height="6.11" fill="rgb(227,227,227)"/><rect x="12.30" y="45.42" width="6.2" height="6.11" fill="rgb(243,243,243)"/><rect x="18.45" y="45.42" width="6.2" height="6.11" fill="rgb(245,245,245)"/><rect x="30.75" y="45.42" width="6.2" height="6.11" fill="rgb(225,225,225)"/><rect x="36.90" y="45.42" width="6.2" height="6.11" fill="rgb(242,242,242)"/><rect x="67.65" y="45.42" width="6.2" height="6.11" fill="rgb(220,220,220)"/><rect x="73.80" y="45.42" width="6.2" height="6.11" fill="rgb(241,241,241)"/><rect x="79.95" y="45.42" width="6.2" height="6.11" fill="rgb(201,201,201)"/><rect x="0.00" y="51.48" width="6.2" height="6.11" fill="rgb(238,238,238)"/><rect x="6.15" y="51.48" width="6.2" height="6.11" fill="rgb(242,242,242)"/><rect x="12.30" y="51.48" width="6.2" height="6.11" fill="rgb(187,187,187)"/><rect x="18.45" y="51.48" width="6.2" height="6.11" fill="rgb(242,242,242)"/><rect x="24.60" y="51.48" width="6.2" height="6.11" fill="rgb(240,240,240)"/><rect x="43.05" y="51.48" width="6.2" height="6.11" fill="rgb(246,246,246)"/><rect x="61.50" y="51.48" width="6.2" height="6.11" fill="rgb(230,230,230)"/><rect x="67.65" y="51.48" width="6.2" height="6.11" fill="rgb(230,230,230)"/><rect x="86.10" y="51.48" width="6.2" height="6.11" fill="rgb(221,221,221)"/><rect x="0.00" y="57.54" width="6.2" height="6.11" fill="rgb(243,243,243)"/><rect x="6.15" y="57.54" width="6.2" height="6.11" fill="rgb(238,238,238)"/><rect x="12.30" y="57.54" width="6.2" height="6.11" fill="rgb(225,225,225)"/><rect x="24.60" y="57.54" width="6.2" height="6.11" fill="rgb(243,243,243)"/><rect x="36.90" y="57.54" width="6.2" height="6.11" fill="rgb(196,196,196)"/><rect x="43.05" y="57.54" width="6.2" height="6.11" fill="rgb(196,196,196)"/><rect x="73.80" y="57.54" width="6.2" height="6.11" fill="rgb(247,247,247)"/><rect x="79.95" y="57.54" width="6.2" height="6.11" fill="rgb(225,225,225)"/><rect x="86.10" y="57.54" width="6.2" height="6.11" fill="rgb(223,223,223)"/><rect x="0.00" y="63.60" width="6.2" height="6.11" fill="rgb(219,219,219)"/><rect x="6.15" y="63.60" width="6.2" height="6.11" fill="rgb(219,219,219)"/><rect x="12.30" y="63.60" width="6.2" height="6.11" fill="rgb(230,230,230)"/><rect x="18.45" y="63.60" width="6.2" height="6.11" fill="rgb(241,241,241)"/><rect x="36.90" y="63.60" width="6.2" height="6.11" fill="rgb(223,223,223)"/><rect x="49.20" y="63.60" width="6.2" height="6.11" fill="rgb(197,197,197)"/><rect x="61.50" y="63.60" width="6.2" height="6.11" fill="rgb(239,239,239)"/><rect x="67.65" y="63.60" width="6.2" height="6.11" fill="rgb(240,240,240)"/><rect x="73.80" y="63.60" width="6.2" height="6.11" fill="rgb(185,185,185)"/><rect x="86.10" y="63.60" width="6.2" height="6.11" fill="rgb(230,230,230)"/><rect x="0.00" y="69.67" width="6.2" height="6.11" fill="rgb(247,247,247)"/><rect x="6.15" y="69.67" width="6.2" height="6.11" fill="rgb(225,225,225)"/><rect x="12.30" y="69.67" width="6.2" height="6.11" fill="rgb(243,243,243)"/><rect x="24.60" y="69.67" width="6.2" height="6.11" fill="rgb(238,238,238)"/><rect x="36.90" y="69.67" width="6.2" height="6.11" fill="rgb(205,205,205)"/><rect x="49.20" y="69.67" width="6.2" height="6.11" fill="rgb(240,240,240)"/><rect x="61.50" y="69.67" width="6.2" height="6.11" fill="rgb(231,231,231)"/><rect x="67.65" y="69.67" width="6.2" height="6.11" fill="rgb(218,218,218)"/><rect x="0.00" y="75.73" width="6.2" height="6.11" fill="rgb(242,242,242)"/><rect x="6.15" y="75.73" width="6.2" height="6.11" fill="rgb(240,240,240)"/><rect x="18.45" y="75.73" width="6.2" height="6.11" fill="rgb(245,245,245)"/><rect x="24.60" y="75.73" width="6.2" height="6.11" fill="rgb(246,246,246)"/><rect x="36.90" y="75.73" width="6.2" height="6.11" fill="rgb(226,226,226)"/><rect x="55.35" y="75.73" width="6.2" height="6.11" fill="rgb(245,245,245)"/><rect x="61.50" y="75.73" width="6.2" height="6.11" fill="rgb(227,227,227)"/><rect x="73.80" y="75.73" width="6.2" height="6.11" fill="rgb(220,220,220)"/><rect x="86.10" y="75.73" width="6.2" height="6.11" fill="rgb(239,239,239)"/><rect x="0.00" y="81.79" width="6.2" height="6.11" fill="rgb(243,243,243)"/><rect x="6.15" y="81.79" width="6.2" height="6.11" fill="rgb(246,246,246)"/><rect x="12.30" y="81.79" width="6.2" height="6.11" fill="rgb(239,239,239)"/><rect x="18.45" y="81.79" width="6.2" height="6.11" fill="rgb(218,218,218)"/><rect x="36.90" y="81.79" width="6.2" height="6.11" fill="rgb(226,226,226)"/><rect x="55.35" y="81.79" width="6.2" height="6.11" fill="rgb(219,219,219)"/><rect x="67.65" y="81.79" width="6.2" height="6.11" fill="rgb(246,246,246)"/><rect x="73.80" y="81.79" width="6.2" height="6.11" fill="rgb(241,241,241)"/><rect x="79.95" y="81.79" width="6.2" height="6.11" fill="rgb(245,245,245)"/><rect x="86.10" y="81.79" width="6.2" height="6.11" fill="rgb(245,245,245)"/><rect x="0.00" y="87.85" width="6.2" height="6.11" fill="rgb(241,241,241)"/><rect x="6.15" y="87.85" width="6.2" height="6.11" fill="rgb(242,242,242)"/><rect x="12.30" y="87.85" width="6.2" height="6.11" fill="rgb(232,232,232)"/><rect x="18.45" y="87.85" width="6.2" height="6.11" fill="rgb(199,199,199)"/><rect x="61.50" y="87.85" width="6.2" height="6.11" fill="rgb(239,239,239)"/><rect x="67.65" y="87.85" width="6.2" height="6.11" fill="rgb(220,220,220)"/><rect x="73.80" y="87.85" width="6.2" height="6.11" fill="rgb(205,205,205)"/><rect x="79.95" y="87.85" width="6.2" height="6.11" fill="rgb(240,240,240)"/><rect x="12.30" y="93.91" width="6.2" height="6.11" fill="rgb(239,239,239)"/><rect x="24.60" y="93.91" width="6.2" height="6.11" fill="rgb(241,241,241)"/><rect x="43.05" y="93.91" width="6.2" height="6.11" fill="rgb(243,243,243)"/><rect x="86.10" y="93.91" width="6.2" height="6.11" fill="rgb(244,244,244)"/><rect x="6.15" y="99.97" width="6.2" height="6.11" fill="rgb(246,246,246)"/><rect x="12.30" y="99.97" width="6.2" height="6.11" fill="rgb(188,188,188)"/><rect x="18.45" y="99.97" width="6.2" height="6.11" fill="rgb(192,192,192)"/><rect x="24.60" y="99.97" width="6.2" height="6.11" fill="rgb(188,188,188)"/><rect x="43.05" y="99.97" width="6.2" height="6.11" fill="rgb(220,220,220)"/><rect x="67.65" y="99.97" width="6.2" height="6.11" fill="rgb(231,231,231)"/><rect x="73.80" y="99.97" width="6.2" height="6.11" fill="rgb(197,197,197)"/><rect x="86.10" y="99.97" width="6.2" height="6.11" fill="rgb(227,227,227)"/><rect x="0.00" y="106.03" width="6.2" height="6.11" fill="rgb(243,243,243)"/><rect x="18.45" y="106.03" width="6.2" height="6.11" fill="rgb(244,244,244)"/><rect x="24.60" y="106.03" width="6.2" height="6.11" fill="rgb(222,222,222)"/><rect x="30.75" y="106.03" width="6.2" height="6.11" fill="rgb(205,205,205)"/><rect x="49.20" y="106.03" width="6.2" height="6.11" fill="rgb(241,241,241)"/><rect x="61.50" y="106.03" width="6.2" height="6.11" fill="rgb(225,225,225)"/><rect x="73.80" y="106.03" width="6.2" height="6.11" fill="rgb(198,198,198)"/><rect x="79.95" y="106.03" width="6.2" height="6.11" fill="rgb(222,222,222)"/><rect x="86.10" y="106.03" width="6.2" height="6.11" fill="rgb(238,238,238)"/><rect x="0.00" y="112.09" width="6.2" height="6.11" fill="rgb(241,241,241)"/><rect x="6.15" y="112.09" width="6.2" height="6.11" fill="rgb(190,190,190)"/><rect x="24.60" y="112.09" width="6.2" height="6.11" fill="rgb(205,205,205)"/><rect x="36.90" y="112.09" width="6.2" height="6.11" fill="rgb(242,242,242)"/><rect x="49.20" y="112.09" width="6.2" height="6.11" fill="rgb(242,242,242)"/><rect x="79.95" y="112.09" width="6.2" height="6.11" fill="rgb(246,246,246)"/><rect x="86.10" y="112.09" width="6.2" height="6.11" fill="rgb(201,201,201)"/><rect x="6.15" y="118.15" width="6.2" height="6.11" fill="rgb(188,188,188)"/><rect x="12.30" y="118.15" width="6.2" height="6.11" fill="rgb(244,244,244)"/><rect x="18.45" y="118.15" width="6.2" height="6.11" fill="rgb(246,246,246)"/><rect x="24.60" y="118.15" width="6.2" height="6.11" fill="rgb(224,224,224)"/><rect x="30.75" y="118.15" width="6.2" height="6.11" fill="rgb(194,194,194)"/><rect x="36.90" y="118.15" width="6.2" height="6.11" fill="rgb(241,241,241)"/><rect x="49.20" y="118.15" width="6.2" height="6.11" fill="rgb(229,229,229)"/><rect x="55.35" y="118.15" width="6.2" height="6.11" fill="rgb(240,240,240)"/><rect x="0.00" y="124.21" width="6.2" height="6.11" fill="rgb(242,242,242)"/><rect x="18.45" y="124.21" width="6.2" height="6.11" fill="rgb(244,244,244)"/><rect x="24.60" y="124.21" width="6.2" height="6.11" fill="rgb(228,228,228)"/><rect x="30.75" y="124.21" width="6.2" height="6.11" fill="rgb(204,204,204)"/><rect x="73.80" y="124.21" width="6.2" height="6.11" fill="rgb(202,202,202)"/><rect x="0.00" y="130.27" width="6.2" height="6.11" fill="rgb(221,221,221)"/><rect x="30.75" y="130.27" width="6.2" height="6.11" fill="rgb(241,241,241)"/><rect x="43.05" y="130.27" width="6.2" height="6.11" fill="rgb(219,219,219)"/><rect x="0.00" y="136.33" width="6.2" height="6.11" fill="rgb(246,246,246)"/><rect x="6.15" y="136.33" width="6.2" height="6.11" fill="rgb(220,220,220)"/><rect x="12.30" y="136.33" width="6.2" height="6.11" fill="rgb(247,247,247)"/><rect x="30.75" y="136.33" width="6.2" height="6.11" fill="rgb(189,189,189)"/><rect x="43.05" y="136.33" width="6.2" height="6.11" fill="rgb(240,240,240)"/><rect x="55.35" y="136.33" width="6.2" height="6.11" fill="rgb(232,232,232)"/><rect x="61.50" y="136.33" width="6.2" height="6.11" fill="rgb(244,244,244)"/><rect x="67.65" y="136.33" width="6.2" height="6.11" fill="rgb(246,246,246)"/><rect x="79.95" y="136.33" width="6.2" height="6.11" fill="rgb(246,246,246)"/><rect x="86.10" y="136.33" width="6.2" height="6.11" fill="rgb(238,238,238)"/><rect x="0.00" y="142.39" width="6.2" height="6.11" fill="rgb(227,227,227)"/><rect x="6.15" y="142.39" width="6.2" height="6.11" fill="rgb(229,229,229)"/><rect x="12.30" y="142.39" width="6.2" height="6.11" fill="rgb(241,241,241)"/><rect x="30.75" y="142.39" width="6.2" height="6.11" fill="rgb(239,239,239)"/><rect x="61.50" y="142.39" width="6.2" height="6.11" fill="rgb(241,241,241)"/><rect x="67.65" y="142.39" width="6.2" height="6.11" fill="rgb(238,238,238)"/><rect x="86.10" y="142.39" width="6.2" height="6.11" fill="rgb(202,202,202)"/><rect x="6.15" y="148.45" width="6.2" height="6.11" fill="rgb(245,245,245)"/><rect x="30.75" y="148.45" width="6.2" height="6.11" fill="rgb(241,241,241)"/><rect x="43.05" y="148.45" width="6.2" height="6.11" fill="rgb(245,245,245)"/><rect x="49.20" y="148.45" width="6.2" height="6.11" fill="rgb(244,244,244)"/><rect x="61.50" y="148.45" width="6.2" height="6.11" fill="rgb(222,222,222)"/><rect x="67.65" y="148.45" width="6.2" height="6.11" fill="rgb(227,227,227)"/><rect x="73.80" y="148.45" width="6.2" height="6.11" fill="rgb(241,241,241)"/><rect x="6.15" y="154.51" width="6.2" height="6.11" fill="rgb(242,242,242)"/><rect x="12.30" y="154.51" width="6.2" height="6.11" fill="rgb(240,240,240)"/><rect x="36.90" y="154.51" width="6.2" height="6.11" fill="rgb(241,241,241)"/><rect x="43.05" y="154.51" width="6.2" height="6.11" fill="rgb(242,242,242)"/><rect x="49.20" y="154.51" width="6.2" height="6.11" fill="rgb(242,242,242)"/><rect x="73.80" y="154.51" width="6.2" height="6.11" fill="rgb(221,221,221)"/><rect x="18.45" y="160.57" width="6.2" height="6.11" fill="rgb(245,245,245)"/><rect x="24.60" y="160.57" width="6.2" height="6.11" fill="rgb(197,197,197)"/><rect x="36.90" y="160.57" width="6.2" height="6.11" fill="rgb(191,191,191)"/><rect x="55.35" y="160.57" width="6.2" height="6.11" fill="rgb(242,242,242)"/><rect x="61.50" y="160.57" width="6.2" height="6.11" fill="rgb(189,189,189)"/><rect x="67.65" y="160.57" width="6.2" height="6.11" fill="rgb(246,246,246)"/><rect x="0.00" y="166.63" width="6.2" height="6.11" fill="rgb(245,245,245)"/><rect x="18.45" y="166.63" width="6.2" height="6.11" fill="rgb(199,199,199)"/><rect x="30.75" y="166.63" width="6.2" height="6.11" fill="rgb(244,244,244)"/><rect x="49.20" y="166.63" width="6.2" height="6.11" fill="rgb(218,218,218)"/><rect x="73.80" y="166.63" width="6.2" height="6.11" fill="rgb(191,191,191)"/><rect x="79.95" y="166.63" width="6.2" height="6.11" fill="rgb(242,242,242)"/><rect x="12.30" y="172.69" width="6.2" height="6.11" fill="rgb(219,219,219)"/><rect x="49.20" y="172.69" width="6.2" height="6.11" fill="rgb(222,222,222)"/><rect x="55.35" y="172.69" width="6.2" height="6.11" fill="rgb(240,240,240)"/><rect x="73.80" y="172.69" width="6.2" height="6.11" fill="rgb(241,241,241)"/><rect x="79.95" y="172.69" width="6.2" height="6.11" fill="rgb(230,230,230)"/><rect x="86.10" y="172.69" width="6.2" height="6.11" fill="rgb(185,185,185)"/><rect x="0.00" y="178.75" width="6.2" height="6.11" fill="rgb(228,228,228)"/><rect x="12.30" y="178.75" width="6.2" height="6.11" fill="rgb(226,226,226)"/><rect x="18.45" y="178.75" width="6.2" height="6.11" fill="rgb(239,239,239)"/><rect x="30.75" y="178.75" width="6.2" height="6.11" fill="rgb(245,245,245)"/><rect x="36.90" y="178.75" width="6.2" height="6.11" fill="rgb(240,240,240)"/><rect x="43.05" y="178.75" width="6.2" height="6.11" fill="rgb(242,242,242)"/><rect x="49.20" y="178.75" width="6.2" height="6.11" fill="rgb(246,246,246)"/><rect x="79.95" y="178.75" width="6.2" height="6.11" fill="rgb(242,242,242)"/><rect x="6.15" y="184.81" width="6.2" height="6.11" fill="rgb(244,244,244)"/><rect x="18.45" y="184.81" width="6.2" height="6.11" fill="rgb(239,239,239)"/><rect x="30.75" y="184.81" width="6.2" height="6.11" fill="rgb(225,225,225)"/><rect x="36.90" y="184.81" width="6.2" height="6.11" fill="rgb(245,245,245)"/><rect x="43.05" y="184.81" width="6.2" height="6.11" fill="rgb(230,230,230)"/><rect x="6.15" y="190.87" width="6.2" height="6.11" fill="rgb(238,238,238)"/><rect x="12.30" y="190.87" width="6.2" height="6.11" fill="rgb(244,244,244)"/><rect x="24.60" y="190.87" width="6.2" height="6.11" fill="rgb(241,241,241)"/><rect x="55.35" y="190.87" width="6.2" height="6.11" fill="rgb(189,189,189)"/><rect x="61.50" y="190.87" width="6.2" height="6.11" fill="rgb(246,246,246)"/><rect x="67.65" y="190.87" width="6.2" height="6.11" fill="rgb(241,241,241)"/><rect x="79.95" y="190.87" width="6.2" height="6.11" fill="rgb(224,224,224)"/><rect x="6.15" y="196.93" width="6.2" height="6.11" fill="rgb(185,185,185)"/><rect x="24.60" y="196.93" width="6.2" height="6.11" fill="rgb(230,230,230)"/><rect x="36.90" y="196.93" width="6.2" height="6.11" fill="rgb(238,238,238)"/><rect x="49.20" y="196.93" width="6.2" height="6.11" fill="rgb(201,201,201)"/><rect x="55.35" y="196.93" width="6.2" height="6.11" fill="rgb(225,225,225)"/><rect x="79.95" y="196.93" width="6.2" height="6.11" fill="rgb(239,239,239)"/><rect x="86.10" y="196.93" width="6.2" height="6.11" fill="rgb(205,205,205)"/><rect x="0.00" y="203.00" width="6.2" height="6.11" fill="rgb(232,232,232)"/><rect x="12.30" y="203.00" width="6.2" height="6.11" fill="rgb(238,238,238)"/><rect x="30.75" y="203.00" width="6.2" height="6.11" fill="rgb(238,238,238)"/><rect x="36.90" y="203.00" width="6.2" height="6.11" fill="rgb(242,242,242)"/><rect x="43.05" y="203.00" width="6.2" height="6.11" fill="rgb(205,205,205)"/><rect x="55.35" y="203.00" width="6.2" height="6.11" fill="rgb(239,239,239)"/><rect x="73.80" y="203.00" width="6.2" height="6.11" fill="rgb(191,191,191)"/><rect x="0.00" y="209.06" width="6.2" height="6.11" fill="rgb(238,238,238)"/><rect x="6.15" y="209.06" width="6.2" height="6.11" fill="rgb(245,245,245)"/><rect x="24.60" y="209.06" width="6.2" height="6.11" fill="rgb(221,221,221)"/><rect x="49.20" y="209.06" width="6.2" height="6.11" fill="rgb(205,205,205)"/><rect x="67.65" y="209.06" width="6.2" height="6.11" fill="rgb(244,244,244)"/><rect x="6.15" y="215.12" width="6.2" height="6.11" fill="rgb(243,243,243)"/><rect x="12.30" y="215.12" width="6.2" height="6.11" fill="rgb(243,243,243)"/><rect x="18.45" y="215.12" width="6.2" height="6.11" fill="rgb(241,241,241)"/><rect x="36.90" y="215.12" width="6.2" height="6.11" fill="rgb(219,219,219)"/><rect x="49.20" y="215.12" width="6.2" height="6.11" fill="rgb(194,194,194)"/><rect x="55.35" y="215.12" width="6.2" height="6.11" fill="rgb(221,221,221)"/><rect x="73.80" y="215.12" width="6.2" height="6.11" fill="rgb(222,222,222)"/><rect x="86.10" y="215.12" width="6.2" height="6.11" fill="rgb(247,247,247)"/><rect x="18.45" y="221.18" width="6.2" height="6.11" fill="rgb(247,247,247)"/><rect x="43.05" y="221.18" width="6.2" height="6.11" fill="rgb(189,189,189)"/><rect x="55.35" y="221.18" width="6.2" height="6.11" fill="rgb(240,240,240)"/><rect x="67.65" y="221.18" width="6.2" height="6.11" fill="rgb(232,232,232)"/><rect x="12.30" y="227.24" width="6.2" height="6.11" fill="rgb(246,246,246)"/><rect x="18.45" y="227.24" width="6.2" height="6.11" fill="rgb(238,238,238)"/><rect x="30.75" y="227.24" width="6.2" height="6.11" fill="rgb(243,243,243)"/><rect x="36.90" y="227.24" width="6.2" height="6.11" fill="rgb(199,199,199)"/><rect x="67.65" y="227.24" width="6.2" height="6.11" fill="rgb(188,188,188)"/><rect x="73.80" y="227.24" width="6.2" height="6.11" fill="rgb(241,241,241)"/><rect x="86.10" y="227.24" width="6.2" height="6.11" fill="rgb(222,222,222)"/><rect x="0.00" y="233.30" width="6.2" height="6.11" fill="rgb(224,224,224)"/><rect x="12.30" y="233.30" width="6.2" height="6.11" fill="rgb(241,241,241)"/><rect x="24.60" y="233.30" width="6.2" height="6.11" fill="rgb(221,221,221)"/><rect x="36.90" y="233.30" width="6.2" height="6.11" fill="rgb(245,245,245)"/><rect x="55.35" y="233.30" width="6.2" height="6.11" fill="rgb(230,230,230)"/><rect x="79.95" y="233.30" width="6.2" height="6.11" fill="rgb(218,218,218)"/><rect x="0.00" y="239.36" width="6.2" height="6.11" fill="rgb(247,247,247)"/><rect x="18.45" y="239.36" width="6.2" height="6.11" fill="rgb(204,204,204)"/><rect x="30.75" y="239.36" width="6.2" height="6.11" fill="rgb(243,243,243)"/><rect x="36.90" y="239.36" width="6.2" height="6.11" fill="rgb(222,222,222)"/><rect x="49.20" y="239.36" width="6.2" height="6.11" fill="rgb(239,239,239)"/><rect x="73.80" y="239.36" width="6.2" height="6.11" fill="rgb(197,197,197)"/><rect x="79.95" y="239.36" width="6.2" height="6.11" fill="rgb(232,232,232)"/><rect x="0.00" y="245.42" width="6.2" height="6.11" fill="rgb(245,245,245)"/><rect x="12.30" y="245.42" width="6.2" height="6.11" fill="rgb(229,229,229)"/><rect x="24.60" y="245.42" width="6.2" height="6.11" fill="rgb(240,240,240)"/><rect x="30.75" y="245.42" width="6.2" height="6.11" fill="rgb(243,243,243)"/><rect x="36.90" y="245.42" width="6.2" height="6.11" fill="rgb(225,225,225)"/><rect x="49.20" y="245.42" width="6.2" height="6.11" fill="rgb(219,219,219)"/><rect x="55.35" y="245.42" width="6.2" height="6.11" fill="rgb(244,244,244)"/><rect x="61.50" y="245.42" width="6.2" height="6.11" fill="rgb(241,241,241)"/><rect x="73.80" y="245.42" width="6.2" height="6.11" fill="rgb(245,245,245)"/><rect x="79.95" y="245.42" width="6.2" height="6.11" fill="rgb(243,243,243)"/><rect x="18.45" y="251.48" width="6.2" height="6.11" fill="rgb(241,241,241)"/><rect x="30.75" y="251.48" width="6.2" height="6.11" fill="rgb(245,245,245)"/><rect x="55.35" y="251.48" width="6.2" height="6.11" fill="rgb(221,221,221)"/><rect x="61.50" y="251.48" width="6.2" height="6.11" fill="rgb(239,239,239)"/><rect x="67.65" y="251.48" width="6.2" height="6.11" fill="rgb(222,222,222)"/><rect x="79.95" y="251.48" width="6.2" height="6.11" fill="rgb(243,243,243)"/><rect x="30.75" y="257.54" width="6.2" height="6.11" fill="rgb(221,221,221)"/><rect x="49.20" y="257.54" width="6.2" height="6.11" fill="rgb(201,201,201)"/><rect x="55.35" y="257.54" width="6.2" height="6.11" fill="rgb(239,239,239)"/><rect x="61.50" y="257.54" width="6.2" height="6.11" fill="rgb(238,238,238)"/><rect x="79.95" y="257.54" width="6.2" height="6.11" fill="rgb(231,231,231)"/></svg>
<div class="a" style="left:21px;top:461.6px;width:1044px;height:12.2px;background:#f9f9f9;"></div>
<svg class="a" style="left:24px;top:463px" width="8" height="10" viewBox="0 0 8 10"><path d="M1 5 L6.8 1 L6.8 9 Z" fill="#8a8a8a" stroke="#8a8a8a" stroke-width="0.8" stroke-linejoin="round"/></svg>
<svg class="a" style="left:1054px;top:463px" width="8" height="10" viewBox="0 0 8 10"><path d="M7 5 L1.2 1 L1.2 9 Z" fill="#8a8a8a" stroke="#8a8a8a" stroke-width="0.8" stroke-linejoin="round"/></svg>
<div class="a" style="left:36px;top:464px;width:763px;height:8px;background:#8a8a8a;border-radius:4px;"></div>
<div class="a" style="left:20.06px;top:485px;font-size:10.8px;line-height:10.8px;color:#3f3f3f;transform:scaleX(1.0872);transform-origin:0 0;">Mostrando de 1 até 9 de 9 registros</div>
<div class="a" style="left:920px;top:475px;width:145px;height:27px;background:#ffffff;border:1px solid #dfe2e6;border-radius:3px;"></div>
<div class="a" style="left:980.5px;top:475px;width:22.3px;height:27px;background:#1bc367;"></div>
<div class="a" style="left:929.10px;top:483px;font-size:11px;line-height:11px;color:#737a81;transform:scaleX(1.1165);transform-origin:0 0;">Anterior</div>
<div class="a" style="left:989.71px;top:483px;font-size:10.5px;line-height:10.5px;color:#e8fff0;transform:scaleX(0.7444);transform-origin:0 0;">1</div>
<div class="a" style="left:1010.60px;top:483px;font-size:11px;line-height:11px;color:#737a81;transform:scaleX(1.1335);transform-origin:0 0;">Próximo</div>
<div class="a" style="left:452.86px;top:531px;font-size:14px;line-height:14px;color:#9a9a9a;transform:scaleX(1.0354);transform-origin:0 0;">powered by</div>
<svg class="a" style="left:532px;top:525px" width="26" height="26" viewBox="-12.5 -12.7 26 26" fill="none" stroke="#9c9c9c" stroke-width="1.05"><rect x="-8.3" y="-8.3" width="16.6" height="16.6" rx="2.6" transform="rotate(6)"/><rect x="-8.3" y="-8.3" width="16.6" height="16.6" rx="2.6" transform="rotate(14)"/><rect x="-8.3" y="-8.3" width="16.6" height="16.6" rx="2.6" transform="rotate(51)"/><rect x="-8.3" y="-8.3" width="16.6" height="16.6" rx="2.6" transform="rotate(59)"/></svg>
<div class="a" style="left:559.85px;top:528px;font-size:18px;line-height:18px;color:#8e8e8e;transform:scaleX(1.0364);transform-origin:0 0;">abensoft</div>
<div class="a" style="left:417.82px;top:556px;font-size:8.5px;line-height:8.5px;color:#4f616b;transform:scaleX(1.0714);transform-origin:0 0;">Termos de Uso</div>
<div class="a" style="left:485px;top:555px;width:1px;height:12px;background:#858a8e;"></div>
<div class="a" style="left:490.27px;top:556px;font-size:8.5px;line-height:8.5px;color:#4f616b;transform:scaleX(1.0775);transform-origin:0 0;">Declaração de Privacidade</div>
<div class="a" style="left:605px;top:555px;width:1px;height:12px;background:#858a8e;"></div>
<div class="a" style="left:610.82px;top:556px;font-size:8.5px;line-height:8.5px;color:#4f616b;transform:scaleX(1.0647);transform-origin:0 0;">Termos LGPD</div>
<div class="a" style="left:13px;top:98px;width:289px;height:42px;border:3px solid #ff0000"></div>
<svg class="a" style="left:0;top:0" width="1087" height="200" viewBox="0 0 1087 200"><path d="M318 120.5 L457 128" stroke="#ff0000" stroke-width="3"/><path d="M302 118.4 L321.8 112.8 L321 125.7 Z" fill="#ff0000"/></svg>
<svg class="a" style="left:1038px;top:763px" width="36" height="36" viewBox="0 0 36 36"><circle cx="17.5" cy="17.8" r="17.1" fill="#0a3a25"/><path d="M14.5 9.5 C19 9.5 21.5 11.5 21.5 14.2 C21.5 17 19 19 14.5 19 C13.5 19 12.5 18.8 11.8 18.6 L8.2 20.2 L9.6 17.6 C8.3 16.6 7.5 15.5 7.5 14.2 C7.5 11.5 10 9.5 14.5 9.5z" fill="#fff"/><path d="M22.6 14.5 C25 15.3 26.5 16.8 26.5 18.7 C26.5 19.8 26 20.8 25 21.6 L26.2 23.8 L23 22.5 C22.2 22.8 21.3 22.9 20.4 22.9 C17.8 22.9 15.8 21.9 15 20.2 C19.8 20 22.8 17.8 22.6 14.5z" fill="#fff"/></svg>
</body></html>
